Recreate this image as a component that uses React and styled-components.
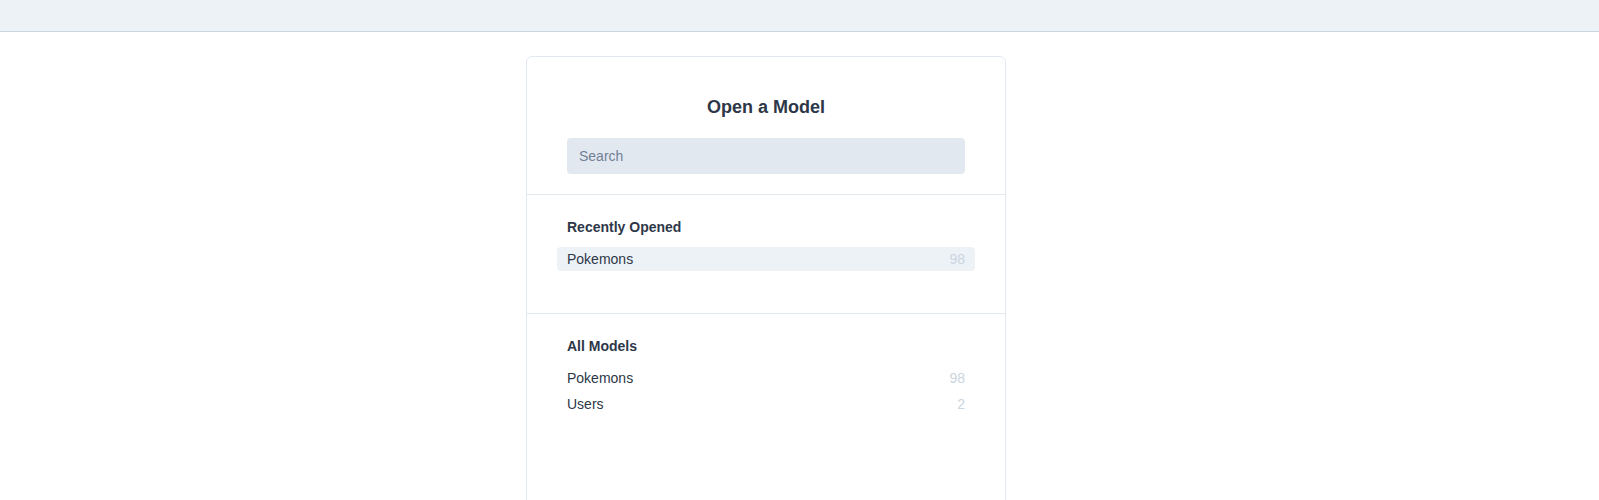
import React from "react";
import styled, { createGlobalStyle } from "styled-components";

const GlobalStyle = createGlobalStyle`
  html, body {
    margin: 0;
    padding: 0;
    background: #ffffff;
    font-family: "Liberation Sans", Arial, Helvetica, sans-serif;
    color: #2d3748;
  }
  * { box-sizing: border-box; }
`;

const TopBar = styled.header`
  height: 32px;
  background: #edf2f7;
  border-bottom: 1px solid #cbd5e0;
`;

const Main = styled.main`
  display: flex;
  padding: 24px 0 0 526px;
`;

const Card = styled.section`
  width: 480px;
  min-height: 470px;
  border: 1px solid #e2e8f0;
  border-radius: 6px;
  background: #ffffff;
  display: flex;
  flex-direction: column;
`;

const Header = styled.div`
  padding: 39px 40px 20px;
  display: flex;
  flex-direction: column;
  align-items: center;
  gap: 20px;
  border-bottom: 1px solid #e2e8f0;
`;

const Title = styled.h1`
  margin: 0;
  font-size: 18px;
  line-height: 22px;
  font-weight: 700;
  color: #2d3748;
`;

const SearchInput = styled.input`
  width: 100%;
  height: 36px;
  border: none;
  outline: none;
  border-radius: 4px;
  background: #e2e8f0;
  padding: 0 12px;
  font-family: inherit;
  font-size: 14px;
  color: #2d3748;
  &::placeholder {
    color: #718096;
  }
`;

const Section = styled.div`
  padding: 24px 40px ${(p) => p.$bottom || 24}px;
  border-bottom: ${(p) => (p.$last ? "none" : "1px solid #e2e8f0")};
`;

const SectionTitle = styled.h2`
  margin: 0 0 12px;
  font-size: 14px;
  line-height: 16px;
  font-weight: 700;
  color: #2d3748;
`;

const List = styled.ul`
  list-style: none;
  margin: 0 -10px;
  padding: 0;
  display: flex;
  flex-direction: column;
  gap: 2px;
`;

const Row = styled.li`
  height: 24px;
  display: flex;
  align-items: center;
  justify-content: space-between;
  padding: 0 10px;
  border-radius: 4px;
  background: ${(p) => (p.$active ? "#edf2f7" : "transparent")};
  font-size: 14px;
  color: #2d3748;
  cursor: pointer;
`;

const Count = styled.span`
  color: #cbd5e0;
`;

const recent = [{ name: "Pokemons", count: 98 }];
const all = [
  { name: "Pokemons", count: 98 },
  { name: "Users", count: 2 },
];

export default function App() {
  return (
    <>
      <GlobalStyle />
      <TopBar />
      <Main>
        <Card>
          <Header>
            <Title>Open a Model</Title>
            <SearchInput placeholder="Search" />
          </Header>
          <Section $bottom={42}>
            <SectionTitle>Recently Opened</SectionTitle>
            <List>
              {recent.map((m, i) => (
                <Row key={m.name} $active={i === 0}>
                  <span>{m.name}</span>
                  <Count>{m.count}</Count>
                </Row>
              ))}
            </List>
          </Section>
          <Section $last>
            <SectionTitle>All Models</SectionTitle>
            <List>
              {all.map((m) => (
                <Row key={m.name}>
                  <span>{m.name}</span>
                  <Count>{m.count}</Count>
                </Row>
              ))}
            </List>
          </Section>
        </Card>
      </Main>
    </>
  );
}
